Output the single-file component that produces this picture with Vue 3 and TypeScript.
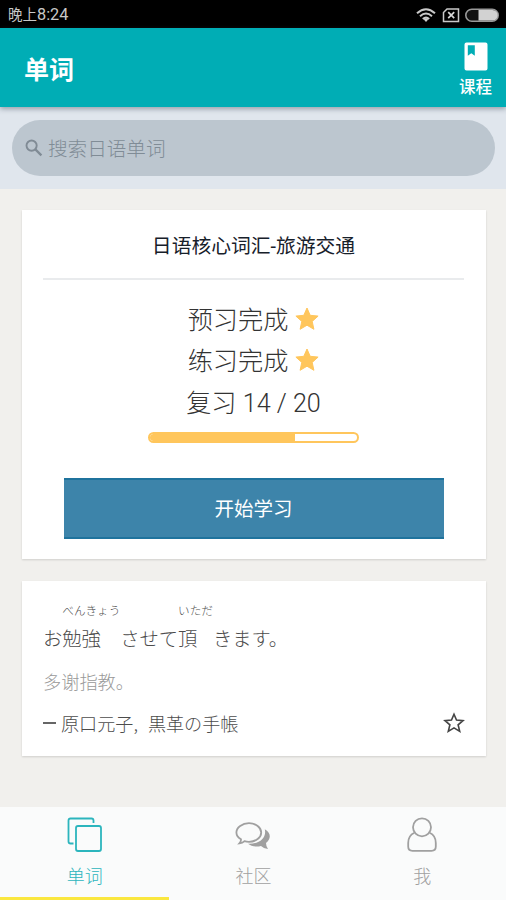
<script setup lang="ts">
import { ref } from 'vue'

interface Task { label: string; done: boolean }
interface Segment { text: string; reading?: string }
interface Tab { id: string; label: string }

const tasks: Task[] = [
  { label: '预习完成', done: true },
  { label: '练习完成', done: true },
  { label: '复习 14 / 20', done: false },
]
const reviewed = 14
const total = 20
const sentence: Segment[] = [
  { text: 'お' },
  { text: '勉強', reading: 'べんきょう' },
  { text: 'させて' },
  { text: '頂', reading: 'いただ' },
  { text: 'きます。' },
]
const tabs: Tab[] = [
  { id: 'words', label: '单词' },
  { id: 'community', label: '社区' },
  { id: 'me', label: '我' },
]
const active = ref('words')
</script>

<template>
  <div class="screen">
    <div class="status">
      <span class="clock">晚上<span class="time">8:24</span></span>
      <svg class="status-icons" viewBox="0 0 84 18" width="84" height="18">
        <g fill="none" stroke="#c9c9c9" stroke-width="2">
          <path d="M1 7.2Q10 -0.8 19 7.2" />
          <path d="M4 10.2Q10 4.8 16 10.2" />
          <path d="M6.8 13Q10 10.2 13.2 13" />
        </g>
        <path d="M7.8 13.5Q10 11.6 12.2 13.5L10 16Z" fill="#d0d0d0" />
        <path d="M31 3H42.5V15.5H27.5V6.5Z" fill="none" stroke="#c9c9c9" stroke-width="1.5" />
        <path d="M32.2 6.2L38.2 12.2M38.2 6.2L32.2 12.2" stroke="#d6d6d6" stroke-width="1.7" />
        <rect x="49.8" y="3.3" width="32.4" height="12" rx="6" fill="#111" stroke="#999" stroke-width="1.6" />
        <path d="M62.5 4H76.5A5.3 5.3 0 0 1 76.5 14.6H62.5Z" fill="#d2d2d2" />
      </svg>
    </div>

    <header class="header">
      <h1>单词</h1>
      <button class="course">
        <svg viewBox="0 0 24 30" width="24" height="30">
          <path fill="#fff" fill-rule="evenodd" d="M2.5 0.5H21.5Q23.5 0.5 23.5 2.5V26.5Q23.5 28.5 21.5 28.5H2.5Q0.5 28.5 0.5 26.5V2.5Q0.5 0.5 2.5 0.5ZM3.8 3.2V13.8L7.3 11.2L10.8 13.8V3.2Z" />
        </svg>
        <span>课程</span>
      </button>
    </header>

    <div class="search-area">
      <div class="search">
        <svg viewBox="0 0 18 18" width="18" height="18" fill="none" stroke="#808b95">
          <circle cx="6.6" cy="6.6" r="5.1" stroke-width="1.9" />
          <path d="M10.4 10.4L16.4 16.4" stroke-width="2.3" />
        </svg>
        <span>搜索日语单词</span>
      </div>
    </div>

    <main class="content">
      <section class="card lesson">
        <h2>日语核心词汇-旅游交通</h2>
        <div class="tasks">
          <div v-for="task in tasks" :key="task.label" class="task">
            <span>{{ task.label }}</span>
            <svg v-if="task.done" viewBox="0 0 24 24" width="24" height="24">
              <path fill="#ffc65c" stroke="#ffc65c" stroke-width="1" stroke-linejoin="round" d="M12 1L15.2 8.3L23.1 9.1L17.2 14.4L18.9 22.3L12 18.2L5.1 22.3L6.8 14.4L0.9 9.1L8.8 8.3Z" />
            </svg>
          </div>
        </div>
        <div class="progress">
          <div class="fill" :style="{ width: (reviewed / total) * 100 + '%' }"></div>
        </div>
        <button class="start">开始学习</button>
      </section>

      <section class="card quote">
        <p class="sentence">
          <span v-for="(part, i) in sentence" :key="i" class="segment">
            <span class="reading">{{ part.reading }}</span>
            <span class="base">{{ part.text }}</span>
          </span>
        </p>
        <p class="translation">多谢指教。</p>
        <div class="source">
          <span class="dash"></span>
          <span class="author">原口元子,</span>
          <span>黒革の手帳</span>
          <svg viewBox="0 0 22 22" width="22" height="22">
            <path fill="none" stroke="#444" stroke-width="1.6" d="M11 2.2L13.5 8.1L20 8.6L15.1 12.8L16.7 19.4L11 15.9L5.3 19.4L6.9 12.8L2 8.6L8.5 8.1Z" />
          </svg>
        </div>
      </section>
    </main>

    <nav class="tabs">
      <button v-for="tab in tabs" :key="tab.id" class="tab" :class="{ active: active === tab.id }" @click="active = tab.id">
        <svg viewBox="0 0 36 36" width="36" height="36" fill="none" stroke="currentColor" stroke-width="1.8">
          <template v-if="tab.id === 'words'">
            <path d="M6.5 26.5H3.5Q1.5 26.5 1.5 24.5V3.5Q1.5 1.5 3.5 1.5H24.5Q26.5 1.5 26.5 3.5V6" />
            <rect x="9" y="9" width="25" height="25" rx="2" />
          </template>
          <template v-else-if="tab.id === 'community'">
            <path d="M14 6.2C20.8 6.2 26.2 10.4 26.2 15.5S20.8 24.8 14 24.8Q11.5 24.8 9.5 24.2Q7.4 26.2 4.4 26.4Q6.2 24.5 6 22.3C3.2 20.6 1.4 18.2 1.4 15.5C1.4 10.4 7.2 6.2 14 6.2Z" />
            <path fill="currentColor" stroke="none" d="M29.8 12.2C36 15.3 36.4 22 31 26Q31 29.6 33 32Q28.6 31.6 26 29C21 30.3 16 29.3 13 26.8C24.5 27.2 31.8 20.8 29.8 12.2Z" />
          </template>
          <template v-else>
            <circle cx="18" cy="10.3" r="9" />
            <path d="M10.4 15.8C6.4 17.6 4.2 21.8 4.2 26V29.5Q4.2 33.8 8.5 33.8H27.5Q31.8 33.8 31.8 29.5V26C31.8 21.8 29.6 17.6 25.6 15.8" />
          </template>
        </svg>
        <span>{{ tab.label }}</span>
      </button>
    </nav>
  </div>
</template>

<style>
body {
  margin: 0;
  background: #f1f0ed;
}
</style>

<style scoped>
.screen {
  display: flex;
  flex-direction: column;
  width: 506px;
  height: 900px;
  overflow: hidden;
  background: #f1f0ed;
  font-family: Roboto, "Noto Sans CJK SC", sans-serif;
}
h1, h2, p { margin: 0; }
svg { display: block; flex: none; }
span { white-space: nowrap; }
button {
  padding: 0;
  border: 0;
  background: none;
  font: inherit;
  color: inherit;
}
.status {
  display: flex;
  align-items: center;
  justify-content: space-between;
  box-sizing: border-box;
  height: 28px;
  padding: 1px 6px 0 8px;
  background: #000;
  color: #c8c8c8;
}
.clock {
  font-family: "Noto Sans CJK SC", sans-serif;
  font-size: 14.5px;
  line-height: 26px;
}
.time {
  font-family: Roboto, sans-serif;
  font-size: 16.3px;
}
.header {
  display: flex;
  justify-content: space-between;
  position: relative;
  height: 79px;
  padding: 0 14px 0 24px;
  background: #00adb5;
  color: #fff;
  box-shadow: 0 2px 5px rgba(60, 75, 90, 0.45);
}
h1 {
  font-size: 25px;
  font-weight: 700;
  line-height: 85px;
}
.course {
  display: flex;
  flex-direction: column;
  align-items: center;
  padding-top: 14px;
  font-size: 16.5px;
  font-weight: 500;
}
.course span { line-height: 31px; }
.search-area {
  box-sizing: border-box;
  height: 82px;
  padding: 13px 11px 13px 12px;
  background: #e0e6ed;
}
.search {
  display: flex;
  align-items: center;
  gap: 5px;
  height: 56px;
  padding-left: 13px;
  border-radius: 28px;
  background: #bcc6cf;
  color: #808c96;
  font-size: 19.6px;
  font-weight: 300;
}
.search span {
  padding-bottom: 2px;
}
.content {
  display: flex;
  flex: 1;
  flex-direction: column;
  gap: 22px;
  padding: 21px 20px 0 22px;
}
.card {
  box-sizing: border-box;
  background: #fff;
  box-shadow: 0 1px 2px rgba(0, 0, 0, 0.14);
}
.lesson {
  display: flex;
  flex-direction: column;
  align-items: center;
  height: 349px;
  padding: 0 22px 0 21px;
}
h2 {
  align-self: stretch;
  height: 68px;
  border-bottom: 2px solid #e9ebed;
  color: #17202a;
  font-size: 19.8px;
  font-weight: 400;
  line-height: 73px;
  text-align: center;
}
.tasks { padding-top: 19px; }
.task {
  display: flex;
  align-items: center;
  justify-content: center;
  gap: 7px;
  height: 41.5px;
  color: #333;
  font-size: 25.2px;
  font-weight: 300;
}
.task span {
  line-height: 40px;
  padding-top: 2px;
}
.task svg { margin-bottom: 2px; }
.progress {
  box-sizing: border-box;
  width: 211px;
  height: 11px;
  margin-top: 8px;
  overflow: hidden;
  border: 2px solid #ffc65c;
  border-radius: 6px;
}
.fill {
  height: 100%;
  background: #ffc65c;
}
.start {
  box-sizing: border-box;
  width: 380px;
  height: 61px;
  margin-top: 35px;
  border: solid #1f739d;
  border-width: 2px 0;
  background: #3d84aa;
  color: #fff;
  font-size: 19.5px;
  line-height: 57px;
  padding-top: 1px;
}
.quote {
  height: 175px;
  padding: 20px 21px 0;
  color: #4c4c4c;
}
.sentence { display: flex; }
.segment {
  display: flex;
  flex-direction: column;
  font-family: "Noto Sans CJK JP", sans-serif;
  font-weight: 300;
}
.reading {
  height: 20px;
  font-size: 11.6px;
  line-height: 19px;
}
.base {
  font-size: 19.3px;
  line-height: 34px;
}
.translation {
  padding-top: 11px;
  color: #999;
  font-size: 18.2px;
  font-weight: 300;
  line-height: 34px;
}
.source {
  display: flex;
  align-items: center;
  height: 34px;
  padding-top: 6px;
  font-family: "Noto Sans CJK JP", sans-serif;
  font-size: 18.1px;
  font-weight: 300;
}
.dash {
  width: 13px;
  height: 1.5px;
  margin-right: 5px;
  background: #666;
}
.author { margin-right: 10px; }
.source svg { margin-left: auto; }
.tabs {
  display: grid;
  grid-template-columns: repeat(3, 1fr);
  height: 93px;
  background: #fafbfb;
}
.tab {
  display: flex;
  flex-direction: column;
  align-items: center;
  box-sizing: border-box;
  height: 93px;
  padding: 10px 0 0 1px;
  border-bottom: 3px solid transparent;
  color: #a0a0a0;
  font-size: 18px;
  font-weight: 300;
}
.tab span {
  margin-top: 3px;
  line-height: 41px;
}
.tab.active {
  border-bottom-color: #fae73f;
  color: #2cb5bd;
}
</style>
